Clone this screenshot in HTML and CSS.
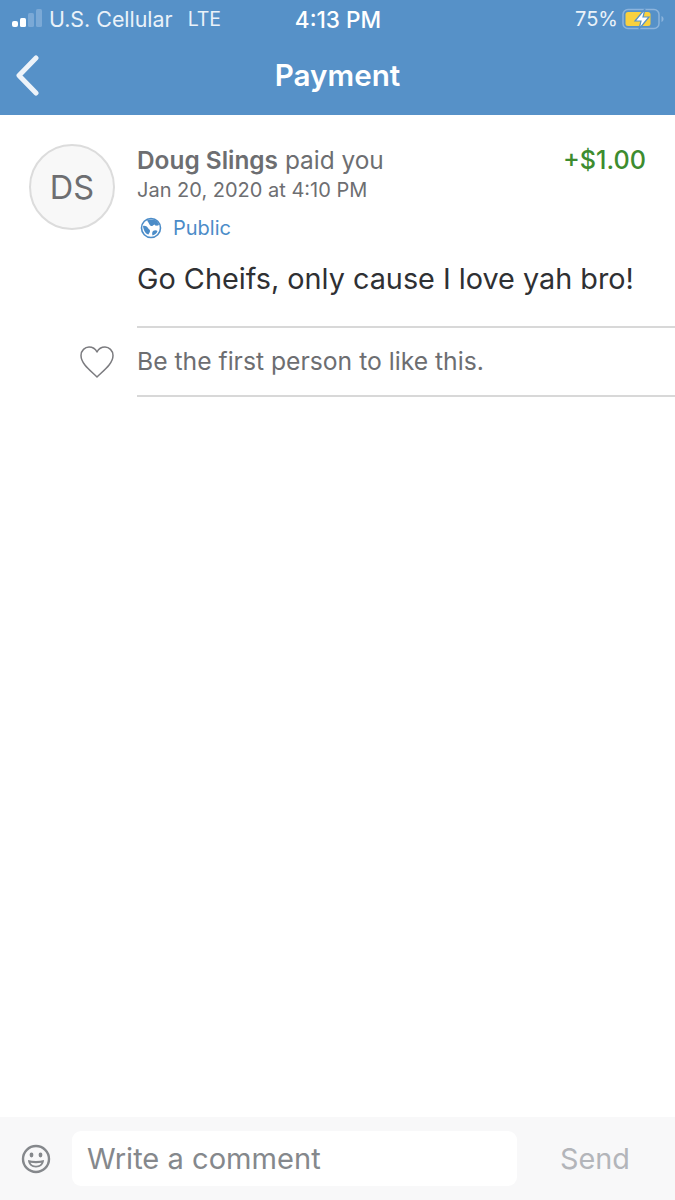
FILE: index.html
```html
<!DOCTYPE html>
<html lang="en">
<head>
  <meta charset="UTF-8">
  <meta name="viewport" content="width=device-width, initial-scale=1.0">
  <title>Payment</title>
  <link rel="stylesheet" href="styles.css">
</head>
<body>
  <div class="screen">
    <!-- Status bar and title -->
    <header class="header">
      <div class="status">
        <div class="status-left">
          <svg class="signal" width="31" height="20" viewBox="0 0 31 20">
            <rect x="0" y="12" width="6" height="6" rx="2" fill="#fff"/>
            <rect x="8" y="9" width="6" height="9" rx="1.5" fill="#fff"/>
            <rect x="16" y="4" width="6" height="14" rx="1.5" fill="#7ba9d6"/>
            <rect x="24" y="0" width="6" height="18" rx="1.5" fill="#7ba9d6"/>
          </svg>
          <span class="carrier">U.S. Cellular</span>
          <span class="network">LTE</span>
        </div>
        <div class="clock">4:13 PM</div>
        <div class="status-right">
          <span>75%</span>
          <svg width="42" height="22" viewBox="0 0 42 22">
            <rect x="1" y="1.5" width="36" height="19" rx="5" fill="none" stroke="#8cb4dc" stroke-width="1.5"/>
            <rect x="3.5" y="4" width="25" height="14" rx="2.5" fill="#f9d13e"/>
            <path d="M39.5 8v6c1.300-.5 2-1.600 2-3s-.7-2.500-2-3z" fill="#8cb4dc"/>
            <path d="M23 1 13 13h6l-2 8 10-12h-6z" fill="#fff" stroke="#5691c8" stroke-width="1.2"/>
          </svg>
        </div>
      </div>
      <div class="titlebar">
        <svg class="back" width="26" height="42" viewBox="0 0 26 42">
          <path d="M21 3 4 20.500 21 38" fill="none" stroke="#edf3f9" stroke-width="5" stroke-linecap="round" stroke-linejoin="round"/>
        </svg>
        <h1>Payment</h1>
      </div>
    </header>

    <!-- Payment story -->
    <main class="content">
      <div class="story">
        <div class="avatar">DS</div>
        <div class="story-body">
          <div class="story-top">
            <div class="headline"><b>Doug Slings</b> paid you</div>
            <div class="amount">+$1.00</div>
          </div>
          <div class="date">Jan 20, 2020 at 4:10 PM</div>
          <div class="privacy">
            <svg width="22" height="22" viewBox="0 0 22 22">
              <circle cx="11" cy="11" r="9.5" fill="#fff" stroke="#4b8cc8" stroke-width="1.6"/>
              <path d="M7 3.500c2-1.200 6-1.500 9 0 1.500 1 2.500 2.500 3 4.500-1.500 1-3.500 1-4.500-.5-1.500.5-2 2-3.500 1.500S9 6 7 3.500z" fill="#4b8cc8"/>
              <path d="M3 9c2-.5 4 .5 5 2s2 1.500 2 3-1 2-1.500 3.500C6 17 3.500 14 3 9z" fill="#4b8cc8"/>
              <path d="M13 14c1.500-1 3.500-1 4.500 0-.5 2-2.500 4-5 4.500-.5-1.500-.5-3.500.5-4.500z" fill="#4b8cc8"/>
            </svg>
            <span>Public</span>
          </div>
          <p class="message">Go Cheifs, only cause I love yah bro!</p>
        </div>
      </div>

      <div class="likes">
        <svg class="heart" width="36" height="34" viewBox="0 0 36 34">
          <path d="M18 32C12 26 2 19 2 10.500 2 5.500 6 2 10 2c3.500 0 6.500 2 8 5 1.500-3 4.500-5 8-5 4 0 8 3.500 8 8.500C34 19 24 26 18 32z" fill="none" stroke="#7b7b7f" stroke-width="1.5" stroke-linejoin="round"/>
        </svg>
        <div class="likes-text">Be the first person to like this.</div>
      </div>
    </main>

    <!-- Comment bar -->
    <footer class="comment-bar">
      <svg class="smiley" width="30" height="30" viewBox="0 0 30 30">
        <circle cx="15" cy="15" r="13" fill="none" stroke="#85888c" stroke-width="2.4"/>
        <ellipse cx="10.500" cy="11" rx="1.900" ry="2.400" fill="#85888c"/>
        <ellipse cx="19.500" cy="11" rx="1.900" ry="2.400" fill="#85888c"/>
        <path d="M7 16c5 1.200 11 1.200 16 0 0 4.500-3.500 7.500-8 7.500S7 20.500 7 16z" fill="#85888c"/>
        <path d="M9.500 18.800c3.500.6 7.500.6 11 0-.8 1.800-2.900 2.900-5.500 2.900s-4.700-1.100-5.500-2.900z" fill="#f8f8f9"/>
      </svg>
      <div class="comment-input">Write a comment</div>
      <div class="send">Send</div>
    </footer>
  </div>
</body>
</html>
```

FILE: styles.css
```css
body {
  margin: 0;
  font-family: "Inter", "Liberation Sans", Arial, sans-serif;
  background-color: #fff;
}
.screen {
  height: 1200px;
  display: flex;
  flex-direction: column;
  overflow: hidden;
}
.header {
  height: 115px;
  flex-shrink: 0;
  background: #5691c8;
  color: #fff;
}
.status {
  height: 38px;
  display: grid;
  grid-template-columns: 1fr auto 1fr;
  align-items: center;
  font-size: 20px;
  padding: 0 11px 0 12px;
}
.status-left {
  display: flex;
  align-items: center;
}
.signal {
  margin-right: 6px;
}
.carrier {
  color: #eaf2f9;
  font-size: 21.4px;
  margin-right: 15px;
}
.network {
  color: #eaf2f9;
  font-size: 19.5px;
}
.clock {
  font-size: 22.6px;
  font-weight: 500;
}
.status-right {
  display: flex;
  justify-content: flex-end;
  align-items: center;
  gap: 4px;
  color: #eaf2f9;
}
.titlebar {
  height: 74px;
  padding-bottom: 2px;
  display: flex;
  align-items: center;
  justify-content: center;
  position: relative;
}
.back {
  position: absolute;
  left: 15px;
  top: 17px;
}
.titlebar h1 {
  margin: 0;
  font-size: 29.6px;
  font-weight: 600;
}
.content {
  flex: 1;
}
.story {
  display: flex;
  padding: 29px 0 0 29px;
}
.avatar {
  width: 82px;
  height: 82px;
  flex-shrink: 0;
  border: 2px solid #dcdcdc;
  border-radius: 50%;
  background: #f8f8f8;
  color: #6d6e71;
  font-size: 32.5px;
  display: flex;
  align-items: center;
  justify-content: center;
}
.story-body {
  flex: 1;
  padding-left: 22px;
}
.story-top {
  display: flex;
  justify-content: space-between;
  padding-right: 29px;
}
.headline {
  font-size: 24.4px;
  color: #6d6e71;
  line-height: 32px;
}
.headline b {
  font-weight: 600;
}
.amount {
  font-size: 25.2px;
  font-weight: 500;
  color: #3d8c2f;
  line-height: 32px;
}
.date {
  font-size: 20px;
  color: #6d6e71;
  line-height: 28px;
}
.privacy {
  display: flex;
  align-items: center;
  gap: 11px;
  margin: 12px 0 0 3px;
  color: #4b8cc8;
  font-size: 20px;
}
.message {
  margin: 21px 0 0;
  font-size: 28.8px;
  line-height: 36px;
  color: #2f3033;
}
.likes {
  display: flex;
  align-items: center;
  margin-top: 29px;
}
.heart {
  width: 36px;
  margin: 0 22px 0 79px;
}
.likes-text {
  flex: 1;
  height: 67px;
  line-height: 67px;
  border-top: 2px solid #d8d8d8;
  border-bottom: 2px solid #d8d8d8;
  font-size: 24.7px;
  color: #6d6e71;
}
.comment-bar {
  height: 83px;
  flex-shrink: 0;
  background: #f8f8f9;
  display: flex;
  align-items: center;
  padding-left: 21px;
}
.smiley {
  margin-right: 21px;
}
.comment-input {
  width: 430px;
  height: 55px;
  line-height: 55px;
  padding-left: 15px;
  background: #fff;
  border-radius: 9px;
  font-size: 29.1px;
  color: #85888c;
}
.send {
  margin-left: 43px;
  font-size: 28.8px;
  color: #b3b5ba;
}
```
